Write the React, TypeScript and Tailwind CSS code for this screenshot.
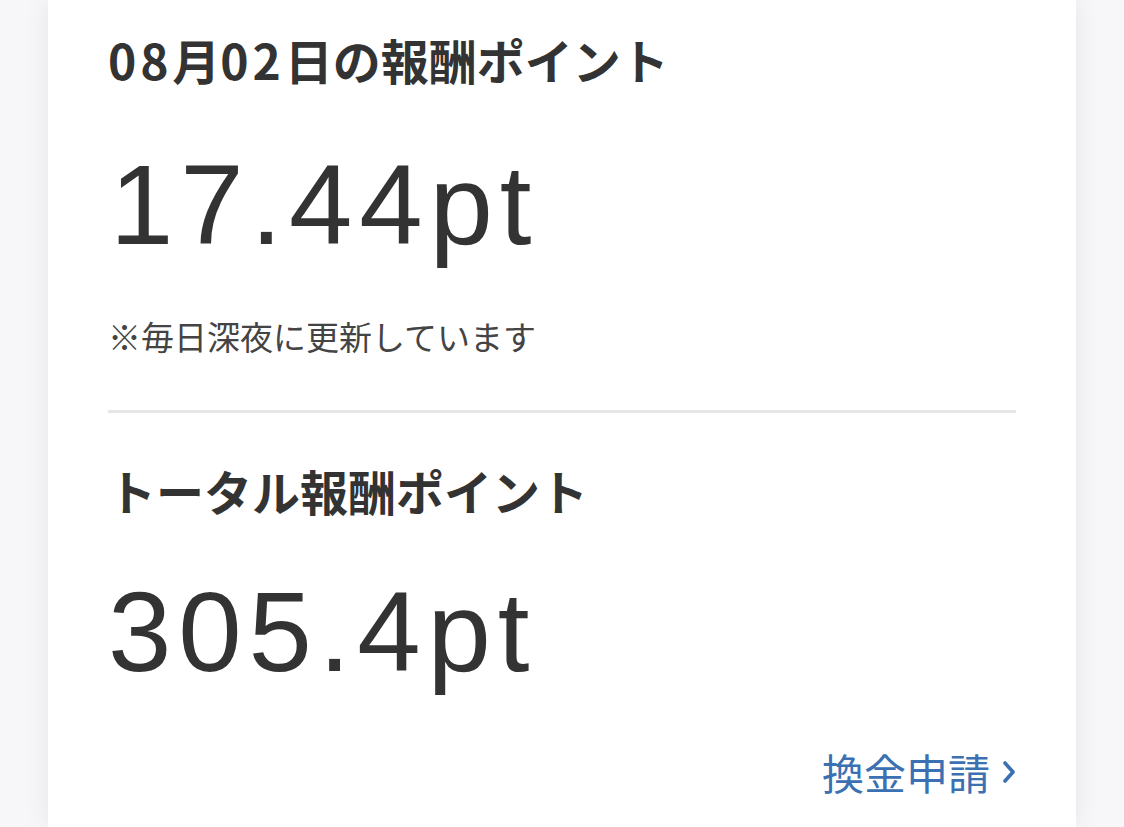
export default function App() {
  return (
    <div
      className="h-[827px] w-[1124px] overflow-hidden bg-[#f7f7f9] px-[48px]"
      style={{ fontFamily: '"Noto Sans CJK JP", "Noto Sans", sans-serif' }}
    >
      <div className="h-full bg-white px-[60px] shadow-[0_0_24px_rgba(0,0,0,0.08)]">
        {/* Daily points */}
        <h2 className="pt-[30px] text-[48px] font-bold leading-[58px] text-[#333]">
          <span className="tracking-[0.08em]">08</span>月
          <span className="tracking-[0.08em]">02</span>日の報酬ポイント
        </h2>
        <p
          className="mt-[60px] pl-[2px] text-[114px] leading-[114px] tracking-[0.06em] text-[#333]"
          style={{ fontFamily: '"Liberation Sans", Arial, sans-serif' }}
        >
          17.44pt
        </p>
        <p className="mt-[54px] text-[33px] leading-[40px] text-[#444]">
          ※毎日深夜に更新しています
        </p>

        <div className="mt-[54px] h-[3px] bg-[#e6e6e8]" />

        {/* Total points */}
        <h2 className="mt-[48px] text-[48px] font-bold leading-[58px] text-[#333]">
          トータル報酬ポイント
        </h2>
        <p
          className="mt-[56px] text-[114px] leading-[114px] tracking-[0.06em] text-[#333]"
          style={{ fontFamily: '"Liberation Sans", Arial, sans-serif' }}
        >
          305.4pt
        </p>

        <div className="mt-[59px] flex justify-end">
          <a className="flex items-center gap-[12px] text-[42px] leading-[48px] text-[#3b70b2]">
            換金申請
            <svg width="14" height="24" viewBox="0 0 14 24" fill="none" aria-hidden="true">
              <path
                d="M3 3L11 12L3 21"
                stroke="#3b70b2"
                strokeWidth="3.6"
                strokeLinecap="round"
                strokeLinejoin="round"
              />
            </svg>
          </a>
        </div>
      </div>
    </div>
  );
}
